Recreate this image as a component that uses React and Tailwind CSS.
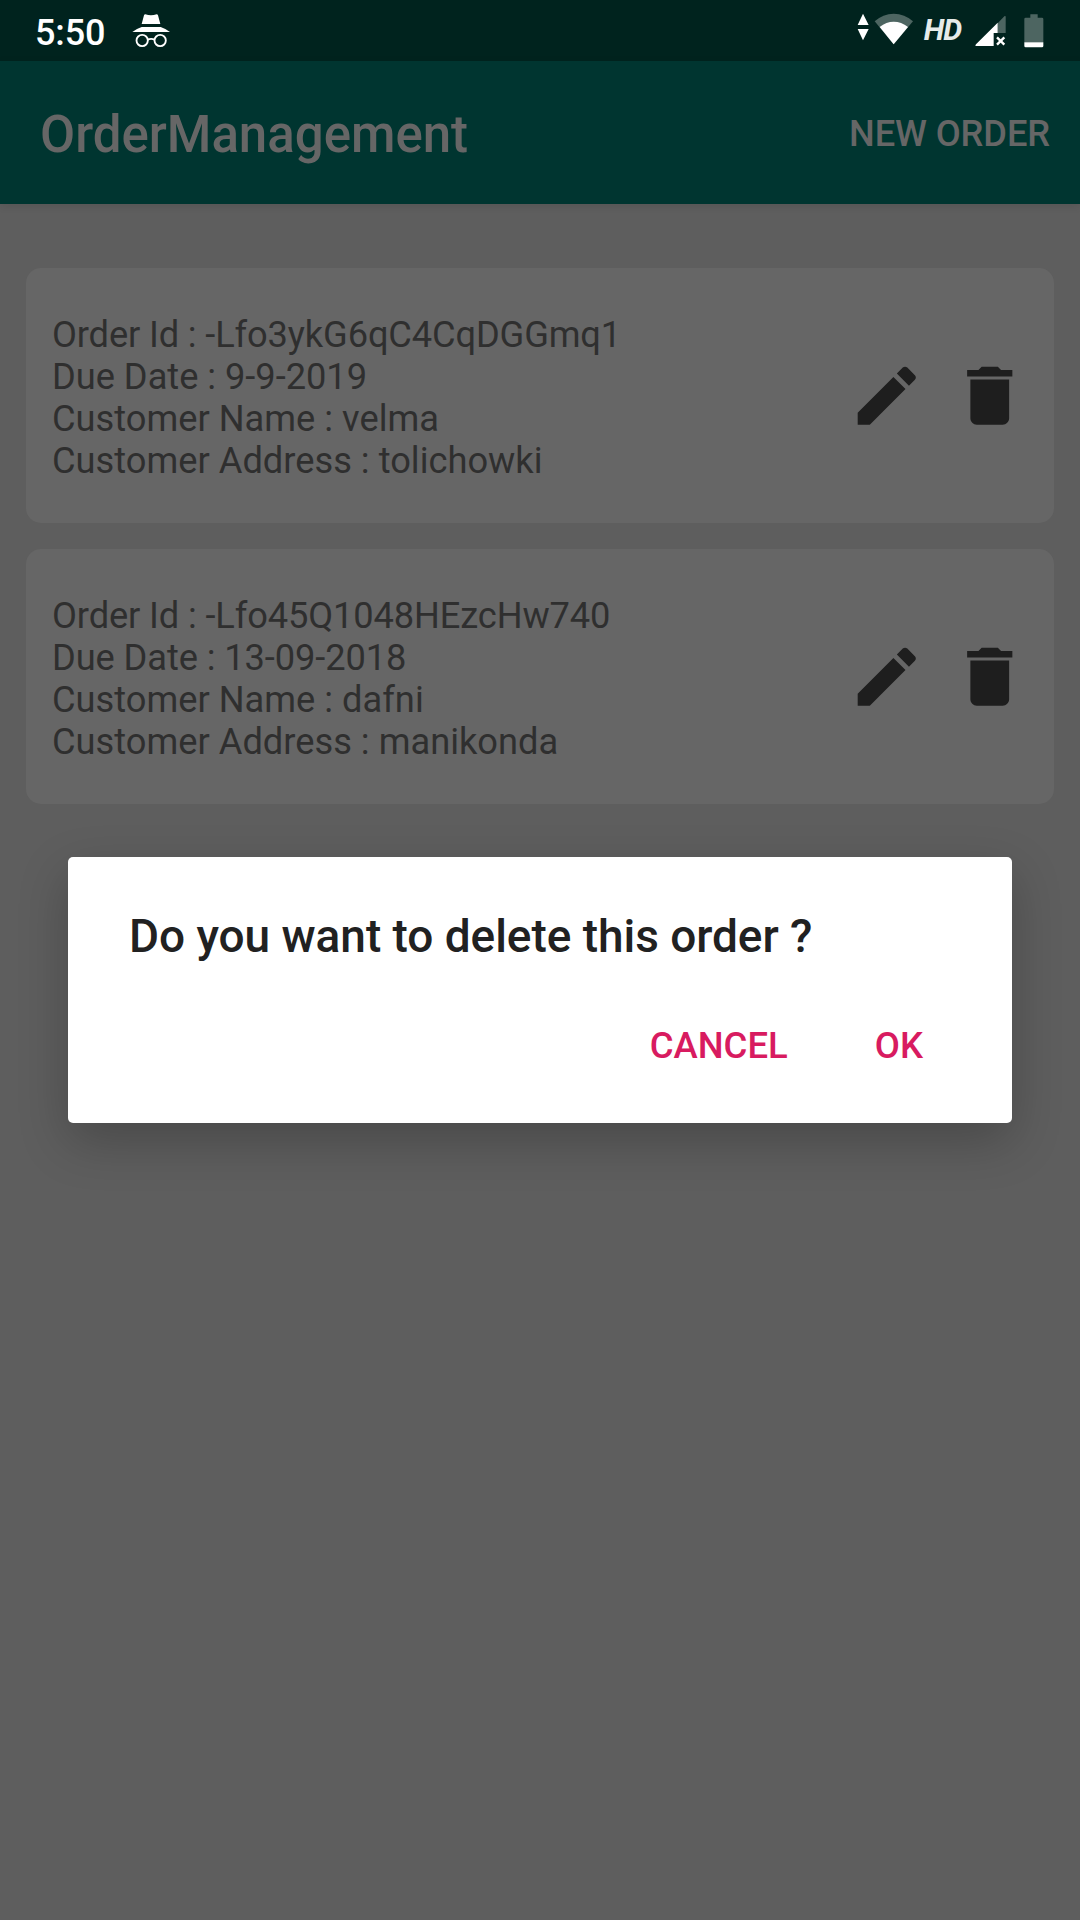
import React from "react";

const orders = [
  {
    id: "-Lfo3ykG6qC4CqDGGmq1",
    due: "9-9-2019",
    name: "velma",
    address: "tolichowki",
    idTracking: "tracking-[-0.14px]",
    dueTracking: "tracking-[-0.03px]",
  },
  {
    id: "-Lfo45Q1048HEzcHw740",
    due: "13-09-2018",
    name: "dafni",
    address: "manikonda",
    idTracking: "tracking-[-0.13px]",
    dueTracking: "tracking-[-0.1px]",
  },
];

function IncognitoIcon() {
  return (
    <svg className="h-[35px] w-[38px]" viewBox="396 42 114 105" fill="#fff">
      <path d="M436 43Q453 49 470 43Q473 43 474 46L481 72H425L432 46Q433 43 436 43Z" />
      <path d="M397 96Q410 86 425 81H482Q497 86 510 96Z" />
      <g fill="none" stroke="#fff" strokeWidth="5.5">
        <circle cx="426.500" cy="121.500" r="17" />
        <circle cx="480.500" cy="121.500" r="17" />
        <path d="M443 119Q453.500 114 464 119" />
      </g>
    </svg>
  );
}

function DataArrows() {
  return (
    <svg className="h-[28px] w-[12px]" viewBox="49 39 36 84" fill="#fff">
      <path d="M67 41L84 75H51ZM51 87H84L67 121Z" />
    </svg>
  );
}

function WifiIcon() {
  return (
    <svg className="h-[32px] w-[40px]" viewBox="101 40 120 96" fill="#fff">
      <path d="M160 134L103 65Q128 42 160 42Q193 42 218 65Z" fillOpacity=".3" />
      <path d="M160 134L118 82Q138 66 160 66Q183 66 203 82Z" />
    </svg>
  );
}

function SignalIcon() {
  return (
    <svg className="h-[32px] w-[31px]" viewBox="403 45 93 96" fill="#fff">
      <path d="M471 70L491 49Q495 46 495 51V99H471Z" fillOpacity=".3" />
      <path d="M471 68V99H459V138H407Q402 138 406 133Z" />
      <path d="M469 112L491 134M491 112L469 134" stroke="#fff" strokeWidth="7" />
    </svg>
  );
}

function BatteryIcon() {
  return (
    <svg className="h-[34px] w-[20px]" viewBox="551 41 60 102" fill="#fff">
      <path d="M570 42H592V52H605Q609 52 609 56V126H552V56Q552 52 556 52H570Z" fillOpacity=".3" />
      <path d="M552 126H609V137Q609 141 605 141H556Q552 141 552 137Z" />
    </svg>
  );
}

function StatusBar() {
  return (
    <div className="flex h-[61px] items-start bg-[#00231e] text-white">
      <span className="ml-[35px] mt-[12px] w-[97px] text-[36px] leading-[43px] font-medium tracking-[-0.1px]">5:50</span>
      <div className="mt-[14px]"><IncognitoIcon /></div>
      <div className="ml-auto mt-[13px]"><DataArrows /></div>
      <div className="ml-[5.200px] mt-[13.300px]"><WifiIcon /></div>
      <span className="ml-[10px] mt-[12px] w-[51px] text-[30px] leading-[35px] font-bold italic tracking-[-0.9px] text-[#e6ebea]">HD</span>
      <div className="mt-[15px]"><SignalIcon /></div>
      <div className="ml-[18px] mr-[36.300px] mt-[13.700px]"><BatteryIcon /></div>
    </div>
  );
}

function EditIcon() {
  return (
    <svg className="size-[77.5px]" viewBox="0 0 24 24" fill="#1e1e1e">
      <path d="M3 17.250V21h3.750L17.810 9.940l-3.750-3.750L3 17.250zM20.710 7.040c.39-.39.39-1.020 0-1.410l-2.340-2.340c-.39-.39-1.020-.39-1.410 0l-1.830 1.830 3.750 3.750 1.830-1.830z" />
    </svg>
  );
}

function DeleteIcon() {
  return (
    <svg className="size-[77.5px]" viewBox="0 0 24 24" fill="#1e1e1e">
      <path d="M6 19c0 1.100.9 2 2 2h8c1.100 0 2-.9 2-2V7H6v12zM19 4h-3.500l-1-1h-5l-1 1H5v2h14V4z" />
    </svg>
  );
}

function OrderCard({ order }) {
  return (
    <div className="flex h-[255px] items-center rounded-[15px] bg-[#666666] pl-[26px] pr-[25.5px]">
      <div className="flex-1 whitespace-nowrap pt-[5px] text-[36.25px] leading-[42px] text-[#2f2f2f]">
        <p className={order.idTracking}>Order Id : {order.id}</p>
        <p className={order.dueTracking}>Due Date : {order.due}</p>
        <p>Customer Name : {order.name}</p>
        <p>Customer Address : {order.address}</p>
      </div>
      <div className="flex gap-[26px]">
        <EditIcon />
        <DeleteIcon />
      </div>
    </div>
  );
}

export default function App() {
  return (
    <div className="relative h-[1920px] w-[1080px] overflow-hidden bg-[#5e5e5e] font-[Roboto,sans-serif]">
      <StatusBar />
      <header className="flex h-[143px] items-center justify-between bg-[#003530] pl-[40px] pr-[30px] pt-[5px] text-[#666666] shadow-[0_2px_8px_rgba(0,0,0,0.1)]">
        <h1 className="text-[51px] leading-[62px] font-medium">OrderManagement</h1>
        <button className="mb-[3px] text-[36.25px] leading-[43px] font-medium tracking-[-0.1px]">NEW ORDER</button>
      </header>
      <main className="flex flex-col gap-[26px] px-[26px] pt-[64px]">
        {orders.map((o) => <OrderCard key={o.id} order={o} />)}
      </main>
      <div className="absolute left-[68px] top-[857px] flex h-[266px] w-[944px] flex-col rounded-[5px] bg-white pl-[61px] pr-[89px] pt-[52px] shadow-[0_18px_50px_rgba(0,0,0,0.23)]">
        <h2 className="whitespace-nowrap text-[46px] leading-[54px] font-medium tracking-[-0.05px] text-[#212121]">Do you want to delete this order ?</h2>
        <div className="mt-[61px] flex justify-end gap-[87px] text-[36.5px] leading-[43px] font-medium text-[#d81b60]">
          <button>CANCEL</button>
          <button>OK</button>
        </div>
      </div>
    </div>
  );
}
